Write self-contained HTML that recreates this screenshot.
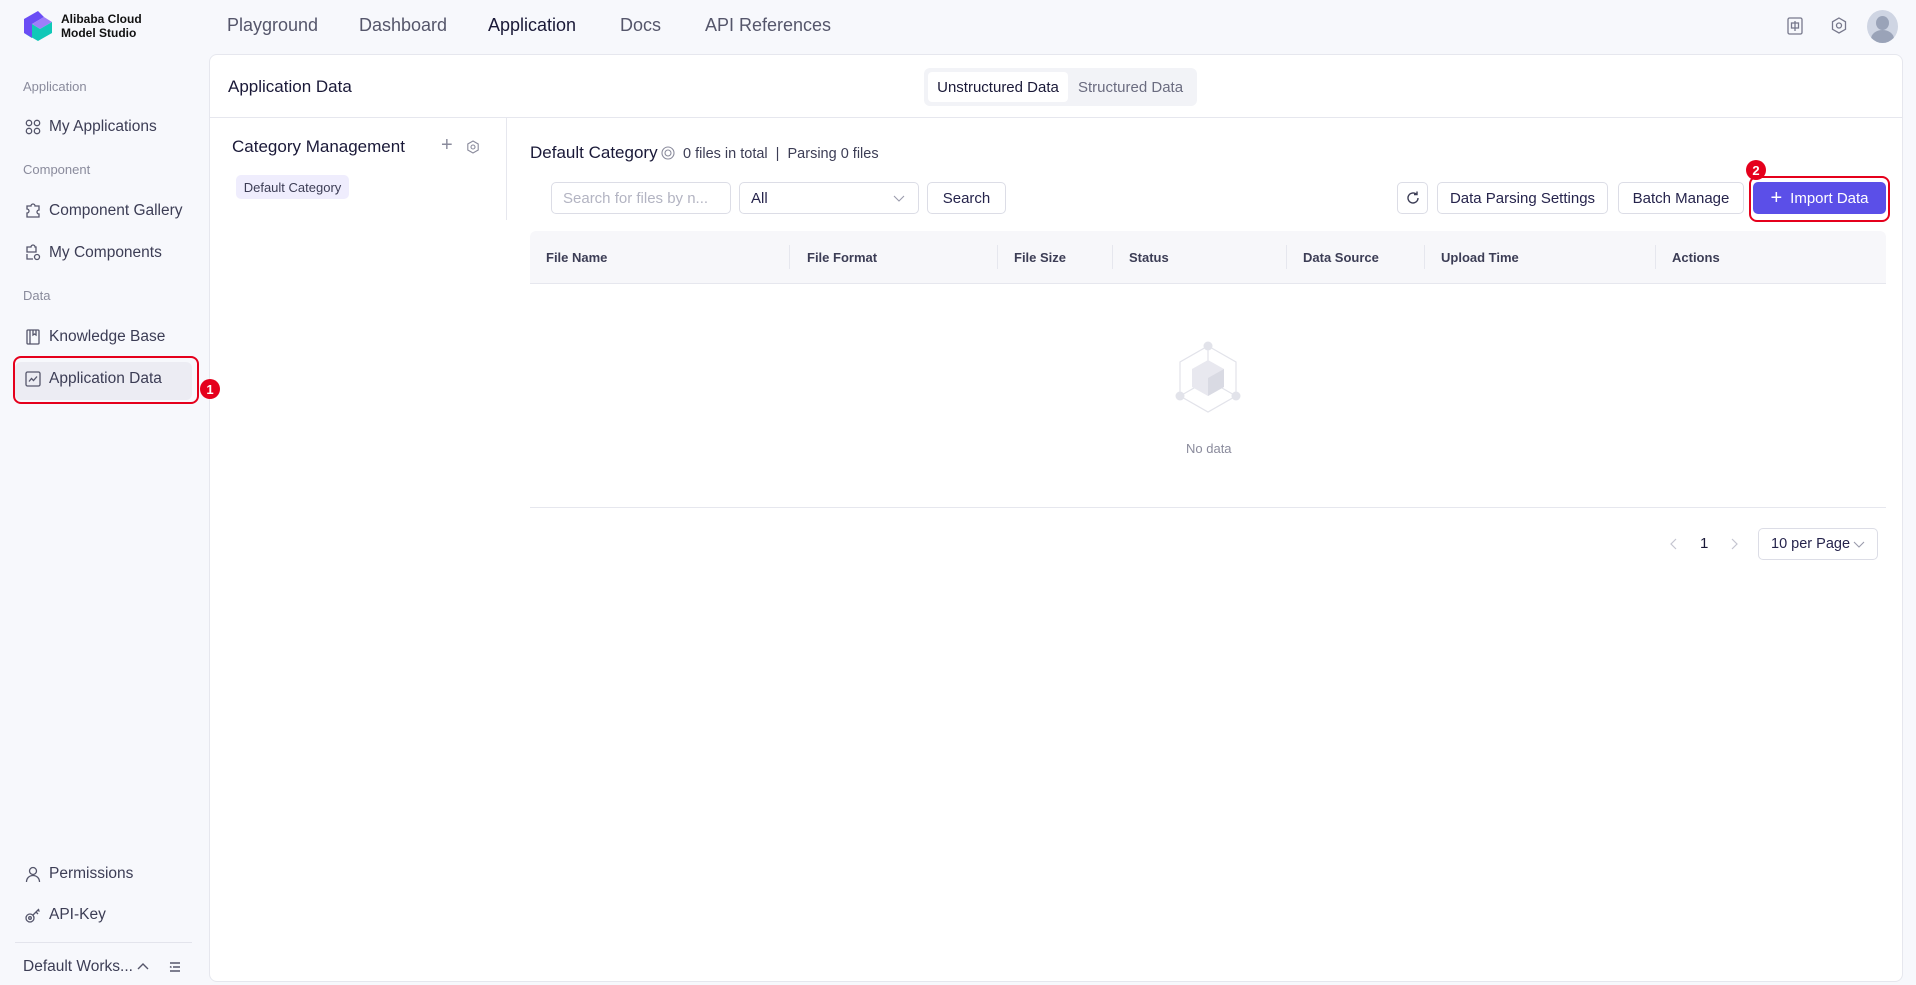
<!DOCTYPE html>
<html><head><meta charset="utf-8"><style>
*{box-sizing:border-box;margin:0;padding:0}
body{width:1916px;height:985px;background:#f7f8fc;font-family:"Liberation Sans",sans-serif;color:#26244c;position:relative;overflow:hidden}
.a{position:absolute;white-space:nowrap}
.nav{font-size:18px;color:#55566b;top:15px}
.lbl{font-size:13px;color:#8a8b9c;left:23px}
.si{font-size:15.5px;color:#3c3d55;left:49px}
.ic{position:absolute;left:24px;width:18px;height:18px}
.btn{position:absolute;height:32px;border:1px solid #dcdde6;border-radius:5px;background:#fff;font-size:15px;color:#26244c;display:flex;align-items:center;justify-content:center}
.th{font-size:13px;font-weight:bold;color:#3c3d55;top:250px}
.dv{position:absolute;top:245px;width:1px;height:24px;background:#e6e7ee}
.badge{position:absolute;z-index:5;width:20px;height:20px;border-radius:50%;background:#e5001c;color:#fff;font-size:13px;font-weight:bold;display:flex;align-items:center;justify-content:center}
</style></head><body>
<!-- logo -->
<svg class="a" style="left:22px;top:10px" width="32" height="32" viewBox="0 0 32 32"><path d="M16 1 L2 9 L2 23 L10 28 L10 14 L22 7Z" fill="#6a4df5"/><path d="M10 14 L22 7 L30 12 L18 19Z" fill="#9d7df9"/><path d="M2 23 L16 31 L30 23 L30 12 L18 19 L10 14 L10 28Z" fill="#10c8b8"/></svg>
<div class="a" style="left:61px;top:12px;font-size:12px;font-weight:bold;line-height:14px;color:#111">Alibaba Cloud<br>Model Studio</div>
<div class="a nav" style="left:227px">Playground</div>
<div class="a nav" style="left:359px">Dashboard</div>
<div class="a nav" style="left:488px;color:#1a1938;font-weight:500">Application</div>
<div class="a nav" style="left:620px">Docs</div>
<div class="a nav" style="left:705px">API References</div>
<svg class="a" style="left:1786px;top:16px" width="18" height="20" viewBox="0 0 18 20" fill="none" stroke="#77788c" stroke-width="1.3"><rect x="2" y="2" width="14" height="16" rx="1.5"/><rect x="5.5" y="7" width="7" height="5"/><path d="M9 5v10"/></svg>
<svg class="a" style="left:1829px;top:16px" width="20" height="20" viewBox="0 0 20 20" fill="none" stroke="#77788c" stroke-width="1.3"><path d="M10 2l6.5 3.8v7.5L10 17l-6.5-3.7V5.8z"/><circle cx="10" cy="9.5" r="2.5"/></svg>
<div class="a" style="left:1867px;top:10px;width:31px;height:33px;border-radius:50%;background:#cfd5e3;overflow:hidden"><div class="a" style="left:9px;top:6px;width:13px;height:14px;border-radius:50%;background:#9aa3b8"></div><div class="a" style="left:4px;top:20px;width:23px;height:18px;border-radius:50%;background:#9aa3b8"></div></div>

<!-- sidebar -->
<div class="a lbl" style="top:79px">Application</div>
<svg class="ic" style="top:118px" viewBox="0 0 18 18" fill="none" stroke="#55566b" stroke-width="1.3"><circle cx="5" cy="5" r="2.7"/><circle cx="13" cy="5" r="2.7"/><circle cx="5" cy="13" r="2.7"/><circle cx="13" cy="13" r="2.7"/></svg>
<div class="a si" style="top:118px">My Applications</div>
<div class="a lbl" style="top:162px">Component</div>
<svg class="ic" style="top:202px" viewBox="0 0 18 18" fill="none" stroke="#55566b" stroke-width="1.3"><path d="M3 4h4a2 2 0 1 1 4 0h4v4a2 2 0 1 0 0 4v3H3v-4a2 2 0 1 0 0-4z"/></svg>
<div class="a si" style="top:202px">Component Gallery</div>
<svg class="ic" style="top:244px" viewBox="0 0 18 18" fill="none" stroke="#55566b" stroke-width="1.3"><path d="M3 3h4a2 2 0 1 1 4 0h1v5H3z"/><circle cx="13" cy="13" r="2.5"/><path d="M3 10v5h6"/></svg>
<div class="a si" style="top:244px">My Components</div>
<div class="a lbl" style="top:288px">Data</div>
<svg class="ic" style="top:328px" viewBox="0 0 18 18" fill="none" stroke="#55566b" stroke-width="1.3"><rect x="3" y="2" width="12" height="14" rx="1"/><path d="M6 2v14M9 2v5l1.5-1 1.5 1V2"/></svg>
<div class="a si" style="top:328px">Knowledge Base</div>
<div class="a" style="left:15px;top:362px;width:177px;height:38px;background:#ececf3;border-radius:6px"></div>
<div class="a" style="left:13px;top:356px;width:186px;height:48px;border:2px solid #e5001c;border-radius:8px"></div>
<svg class="ic" style="top:370px" viewBox="0 0 18 18" fill="none" stroke="#55566b" stroke-width="1.3"><rect x="2" y="2" width="14" height="14" rx="1.5"/><path d="M5 11.5l2.5-3 2 2 3.5-4"/></svg>
<div class="a si" style="top:370px">Application Data</div>
<svg class="ic" style="top:865px" viewBox="0 0 18 18" fill="none" stroke="#55566b" stroke-width="1.3"><circle cx="9" cy="6" r="3.5"/><path d="M2.5 17c0-4 3-6.5 6.5-6.5s6.5 2.5 6.5 6.5"/></svg>
<div class="a si" style="top:865px">Permissions</div>
<svg class="ic" style="top:906px" viewBox="0 0 18 18" fill="none" stroke="#55566b" stroke-width="1.3"><circle cx="6" cy="12" r="4"/><circle cx="6" cy="12" r="1.3"/><path d="M9 9l6-6M12 6l2 2M14 4l1.5 1.5"/></svg>
<div class="a si" style="top:906px">API-Key</div>
<div class="a" style="left:15px;top:942px;width:177px;height:1px;background:#e3e4ec"></div>
<div class="a" style="left:23px;top:958px;font-size:15.5px;color:#3c3d55">Default Works...</div>
<svg class="a" style="left:136px;top:960px" width="14" height="14" viewBox="0 0 14 14" fill="none" stroke="#55566b" stroke-width="1.4"><path d="M2 9l5-5 5 5"/></svg>
<svg class="a" style="left:168px;top:960px" width="14" height="14" viewBox="0 0 14 14" fill="none" stroke="#55566b" stroke-width="1.4"><path d="M2 3h10M5 7h7M2 11h10M2 6.5l1.5 1"/></svg>

<!-- main panel -->
<div class="a" style="left:209px;top:54px;width:1694px;height:928px;background:#fff;border:1px solid #e6e7ee;border-radius:8px"></div>
<div class="badge" style="left:200px;top:379px">1</div>
<div class="a" style="left:228px;top:77px;font-size:17px;color:#1a1938">Application Data</div>
<div class="a" style="left:924px;top:68px;width:273px;height:38px;background:#f2f3f7;border-radius:6px"></div>
<div class="a" style="left:928px;top:72px;width:140px;height:30px;background:#fff;border-radius:4px;font-size:15px;color:#1a1938;display:flex;align-items:center;justify-content:center">Unstructured Data</div>
<div class="a" style="left:1078px;top:79px;font-size:15px;color:#6b6c80">Structured Data</div>
<div class="a" style="left:210px;top:117px;width:1692px;height:1px;background:#e6e7ee"></div>
<div class="a" style="left:506px;top:118px;width:1px;height:102px;background:#e6e7ee"></div>

<div class="a" style="left:232px;top:137px;font-size:17px;color:#1a1938">Category Management</div>
<div class="a" style="left:441px;top:134px;font-size:20px;color:#8a8b9c">+</div>
<svg class="a" style="left:466px;top:140px" width="14" height="14" viewBox="0 0 14 14" fill="none" stroke="#8a8b9c" stroke-width="1.1"><path d="M7 1l5.2 3v6L7 13l-5.2-3V4z"/><circle cx="7" cy="7" r="2"/></svg>
<div class="a" style="left:236px;top:175px;width:113px;height:24px;background:#efedfd;border-radius:5px;font-size:13px;color:#3c3d55;display:flex;align-items:center;justify-content:center">Default Category</div>

<div class="a" style="left:530px;top:143px;font-size:17px;color:#1a1938">Default Category</div>
<svg class="a" style="left:661px;top:146px" width="14" height="14" viewBox="0 0 14 14" fill="none" stroke="#8a8b9c" stroke-width="1.1"><circle cx="7" cy="7" r="6"/><circle cx="7" cy="7" r="3"/></svg>
<div class="a" style="left:683px;top:146px;font-size:14.5px;color:#3c3d55">0 files in total &nbsp;| &nbsp;Parsing 0 files</div>

<div class="btn" style="left:551px;top:182px;width:180px;justify-content:flex-start;padding-left:11px;color:#b3b4c2">Search for files by n...</div>
<div class="btn" style="left:739px;top:182px;width:180px;justify-content:flex-start;padding-left:11px">All</div>
<svg class="a" style="left:893px;top:193px" width="12" height="10" viewBox="0 0 12 10" fill="none" stroke="#9a9bac" stroke-width="1.1"><path d="M1 3l5 5 5-5"/></svg>
<div class="btn" style="left:927px;top:182px;width:79px">Search</div>
<div class="btn" style="left:1397px;top:182px;width:31px"><svg width="16" height="16" viewBox="0 0 16 16" fill="none" stroke="#3c3d55" stroke-width="1.4"><path d="M13 8a5 5 0 1 1-1.5-3.6M12 1.5v3h-3"/></svg></div>
<div class="btn" style="left:1437px;top:182px;width:171px">Data Parsing Settings</div>
<div class="btn" style="left:1618px;top:182px;width:126px">Batch Manage</div>
<div class="btn" style="left:1753px;top:182px;width:133px;background:#5b4fe8;border-color:#5b4fe8;color:#fff"><span style="font-size:20px;margin-right:8px;font-weight:300">+</span>Import Data</div>
<div class="a" style="left:1749px;top:176px;width:141px;height:46px;border:2px solid #e5001c;border-radius:8px"></div>
<div class="badge" style="left:1746px;top:160px">2</div>

<div class="a" style="left:530px;top:231px;width:1356px;height:53px;background:#f7f7fa;border-bottom:1px solid #e6e7ee;border-radius:6px 6px 0 0"></div>
<div class="a th" style="left:546px">File Name</div>
<div class="a th" style="left:807px">File Format</div>
<div class="a th" style="left:1014px">File Size</div>
<div class="a th" style="left:1129px">Status</div>
<div class="a th" style="left:1303px">Data Source</div>
<div class="a th" style="left:1441px">Upload Time</div>
<div class="a th" style="left:1672px">Actions</div>
<div class="dv" style="left:789px"></div><div class="dv" style="left:997px"></div><div class="dv" style="left:1112px"></div><div class="dv" style="left:1286px"></div><div class="dv" style="left:1424px"></div><div class="dv" style="left:1655px"></div>

<svg class="a" style="left:1172px;top:340px" width="72" height="80" viewBox="0 0 72 80"><g fill="none" stroke="#e2e3ea" stroke-width="1.2"><path d="M36 6 L64 22 L64 56 L36 72 L8 56 L8 22Z"/><path d="M8 56 L36 40 L64 56M36 6v34"/></g><path d="M36 20 L52 29 L52 47 L36 56 L20 47 L20 29Z" fill="#e8e8ef"/><path d="M36 38 L52 29 L52 47 L36 56Z" fill="#d9dae3"/><g fill="#e2e3ea"><circle cx="36" cy="6" r="4.5"/><circle cx="8" cy="56" r="4.5"/><circle cx="64" cy="56" r="4.5"/></g></svg>
<div class="a" style="left:1186px;top:441px;font-size:13px;color:#8a8b9c">No data</div>
<div class="a" style="left:530px;top:507px;width:1356px;height:1px;background:#e6e7ee"></div>

<svg class="a" style="left:1669px;top:538px" width="10" height="12" viewBox="0 0 10 12" fill="none" stroke="#c4c5d0" stroke-width="1.2"><path d="M7 1L2 6l5 5"/></svg>
<div class="a" style="left:1700px;top:535px;font-size:15px;color:#1a1938">1</div>
<svg class="a" style="left:1729px;top:538px" width="10" height="12" viewBox="0 0 10 12" fill="none" stroke="#c4c5d0" stroke-width="1.2"><path d="M3 1l5 5-5 5"/></svg>
<div class="btn" style="left:1758px;top:528px;width:120px;justify-content:flex-start;padding-left:12px;font-size:14.5px">10 per Page</div>
<svg class="a" style="left:1853px;top:539px" width="12" height="10" viewBox="0 0 12 10" fill="none" stroke="#9a9bac" stroke-width="1.1"><path d="M1 3l5 5 5-5"/></svg>
</body></html>
